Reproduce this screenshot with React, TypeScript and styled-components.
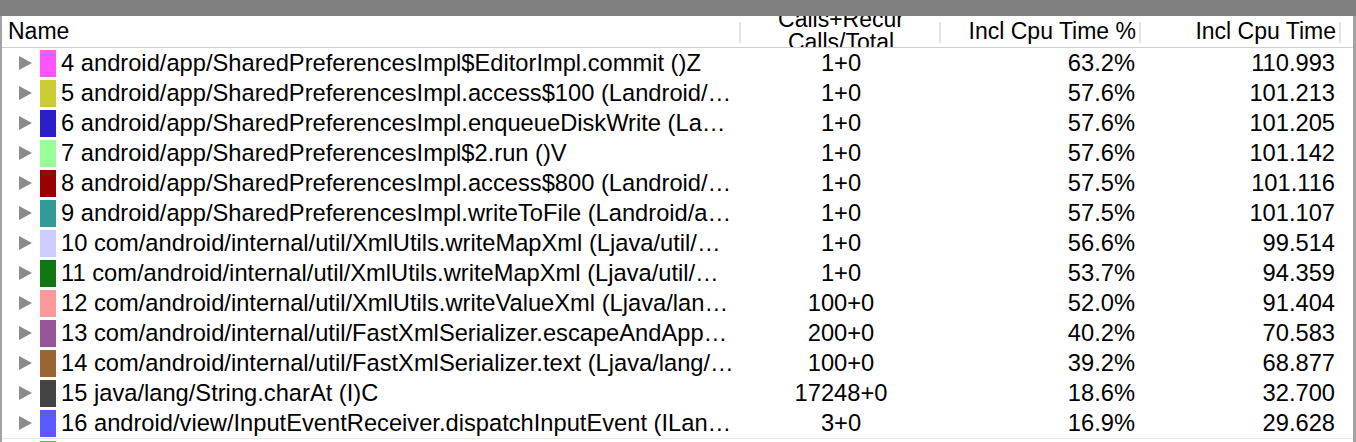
import React from "react";
import styled, { createGlobalStyle } from "styled-components";

const Global = createGlobalStyle`
  html, body { margin: 0; padding: 0; background: #ffffff; }
  body { font-family: "Liberation Sans", Arial, sans-serif; overflow: hidden; }
`;

const Window = styled.div`
  width: 1356px;
  height: 442px;
  overflow: hidden;
  display: flex;
  flex-direction: column;
  background: #ffffff;
`;

const TitleBar = styled.div`
  height: 16px;
  flex: none;
  background: #808080;
`;

const Body = styled.div`
  flex: 1;
  display: flex;
  flex-direction: column;
  border-left: 2px solid #a3a3a3;
  border-right: 3px solid #a3a3a3;
  overflow: hidden;
`;

const cols = "739px 200px 200px 200px 1fr";

const HeaderRow = styled.div`
  height: 31px;
  flex: none;
  display: grid;
  grid-template-columns: ${cols};
  border-bottom: 1px solid #cfcfcf;
  font-size: 23px;
  color: #000;
`;

const HeaderCell = styled.div<{ $align: "left" | "center" | "right"; $sep?: boolean; $stack?: boolean }>`
  position: relative;
  display: flex;
  flex-direction: column;
  justify-content: center;
  align-items: ${(p) => (p.$align === "left" ? "flex-start" : p.$align === "right" ? "flex-end" : "center")};
  padding: ${(p) => (p.$align === "left" ? "0 0 0 6px" : p.$align === "right" ? "0 5px 0 0" : "0 0 2px 0")};
  overflow: hidden;
  line-height: ${(p) => (p.$stack ? "23px" : "21px")};
  white-space: nowrap;
  &::after {
    content: "";
    display: ${(p) => (p.$sep ? "block" : "none")};
    position: absolute;
    right: 0;
    top: 6px;
    width: 2px;
    height: 21px;
    background: #e4e4e4;
  }
`;

const Rows = styled.div`
  display: flex;
  flex-direction: column;
`;

const Row = styled.div<{ $topLine?: boolean }>`
  height: 30px;
  flex: none;
  display: grid;
  grid-template-columns: ${cols};
  align-items: center;
  font-size: 23.7px;
  color: #000;
  ${(p) => (p.$topLine ? "border-top: 1px solid #e6e6e6;" : "")}
`;

const NameCell = styled.div`
  display: flex;
  align-items: center;
  min-width: 0;
  padding-left: 17px;
`;

const Arrow = styled.span`
  flex: none;
  width: 0;
  height: 0;
  border-top: 7px solid transparent;
  border-bottom: 7px solid transparent;
  border-left: 13px solid #8b8b8b;
  margin-right: 8px;
`;

const Swatch = styled.span<{ $color: string }>`
  flex: none;
  width: 16px;
  height: 27px;
  background: ${(p) => p.$color};
  margin-right: 5px;
`;

const NameText = styled.span`
  flex: 1;
  min-width: 0;
  overflow: hidden;
  text-overflow: ellipsis;
  white-space: nowrap;
  padding-right: 6px;
`;

const NumCell = styled.div<{ $align: "center" | "right" }>`
  text-align: ${(p) => p.$align};
  padding-right: ${(p) => (p.$align === "right" ? "6px" : "0")};
  white-space: nowrap;
`;

type R = { id: number; name: string; color: string; calls: string; pct: string; time: string };

const data: R[] = [
  { id: 4, name: "android/app/SharedPreferencesImpl$EditorImpl.commit ()Z", color: "#ff55ff", calls: "1+0", pct: "63.2%", time: "110.993" },
  { id: 5, name: "android/app/SharedPreferencesImpl.access$100 (Landroid/app/SharedPreferencesImpl;)V", color: "#cccc33", calls: "1+0", pct: "57.6%", time: "101.213" },
  { id: 6, name: "android/app/SharedPreferencesImpl.enqueueDiskWrite (Landroid/app/SharedPreferencesImpl)", color: "#2a1fc8", calls: "1+0", pct: "57.6%", time: "101.205" },
  { id: 7, name: "android/app/SharedPreferencesImpl$2.run ()V", color: "#99ff99", calls: "1+0", pct: "57.6%", time: "101.142" },
  { id: 8, name: "android/app/SharedPreferencesImpl.access$800 (Landroid/app/SharedPreferencesImpl;)V", color: "#990000", calls: "1+0", pct: "57.5%", time: "101.116" },
  { id: 9, name: "android/app/SharedPreferencesImpl.writeToFile (Landroid/app/SharedPreferencesImpl)", color: "#339999", calls: "1+0", pct: "57.5%", time: "101.107" },
  { id: 10, name: "com/android/internal/util/XmlUtils.writeMapXml (Ljava/util/Map;Ljava/io/OutputStream;)V", color: "#ccccff", calls: "1+0", pct: "56.6%", time: "99.514" },
  { id: 11, name: "com/android/internal/util/XmlUtils.writeMapXml (Ljava/util/Map;Ljava/lang/String;)V", color: "#117711", calls: "1+0", pct: "53.7%", time: "94.359" },
  { id: 12, name: "com/android/internal/util/XmlUtils.writeValueXml (Ljava/lang/Object;Ljava/lang/String;)V", color: "#ff9999", calls: "100+0", pct: "52.0%", time: "91.404" },
  { id: 13, name: "com/android/internal/util/FastXmlSerializer.escapeAndAppendString (Ljava/lang/String;)V", color: "#995599", calls: "200+0", pct: "40.2%", time: "70.583" },
  { id: 14, name: "com/android/internal/util/FastXmlSerializer.text (Ljava/lang/String;)Lorg/xmlpull/v1/XmlSerializer;", color: "#996633", calls: "100+0", pct: "39.2%", time: "68.877" },
  { id: 15, name: "java/lang/String.charAt (I)C", color: "#444444", calls: "17248+0", pct: "18.6%", time: "32.700" },
  { id: 16, name: "android/view/InputEventReceiver.dispatchInputEvent (ILandroid/view/InputEvent;)V", color: "#5a5aff", calls: "3+0", pct: "16.9%", time: "29.628" },
  { id: 17, name: "android/view/InputEventReceiver.finishInputEvent (Landroid/view/InputEvent;Z)V", color: "#33dd33", calls: "3+0", pct: "16.0%", time: "28.100" },
];

export default function App() {
  return (
    <>
      <Global />
      <Window>
        <TitleBar />
        <Body>
          <HeaderRow>
            <HeaderCell $align="left" $sep>Name</HeaderCell>
            <HeaderCell $align="center" $sep $stack>
              <span>Calls+Recur</span>
              <span>Calls/Total</span>
            </HeaderCell>
            <HeaderCell $align="right" $sep>Incl Cpu Time %</HeaderCell>
            <HeaderCell $align="right" $sep>Incl Cpu Time</HeaderCell>
            <HeaderCell $align="left" />
          </HeaderRow>
          <Rows>
            {data.map((r, i) => (
              <Row key={r.id} $topLine={i === data.length - 1}>
                <NameCell>
                  <Arrow />
                  <Swatch $color={r.color} />
                  <NameText>
                    {r.id} {r.name}
                  </NameText>
                </NameCell>
                <NumCell $align="center">{r.calls}</NumCell>
                <NumCell $align="right">{r.pct}</NumCell>
                <NumCell $align="right">{r.time}</NumCell>
                <div />
              </Row>
            ))}
          </Rows>
        </Body>
      </Window>
    </>
  );
}
